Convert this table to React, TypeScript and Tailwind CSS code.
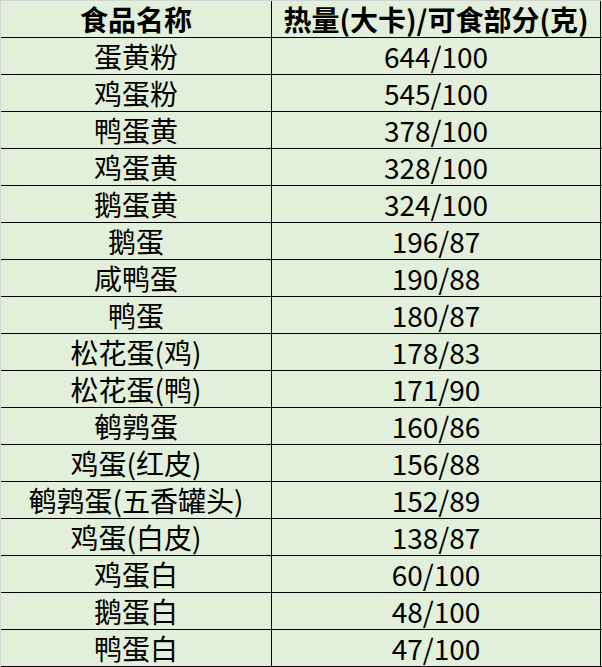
const rows: [string, string][] = [
  ["蛋黄粉", "644/100"],
  ["鸡蛋粉", "545/100"],
  ["鸭蛋黄", "378/100"],
  ["鸡蛋黄", "328/100"],
  ["鹅蛋黄", "324/100"],
  ["鹅蛋", "196/87"],
  ["咸鸭蛋", "190/88"],
  ["鸭蛋", "180/87"],
  ["松花蛋(鸡)", "178/83"],
  ["松花蛋(鸭)", "171/90"],
  ["鹌鹑蛋", "160/86"],
  ["鸡蛋(红皮)", "156/88"],
  ["鹌鹑蛋(五香罐头)", "152/89"],
  ["鸡蛋(白皮)", "138/87"],
  ["鸡蛋白", "60/100"],
  ["鹅蛋白", "48/100"],
  ["鸭蛋白", "47/100"],
];

const Row = ({ name, value, head }: { name: string; value: string; head?: boolean }) => (
  <div className={`flex h-[37px] border-b border-black leading-[36px] ${head ? "font-bold" : ""}`}>
    <div className="w-[271px] border-r border-black text-center">{name}</div>
    <div className="w-[329px] border-r border-black text-center">{value}</div>
  </div>
);

export default function App() {
  return (
    <div
      className="h-[667px] w-[602px] border-l border-t border-[#d4d4d4] bg-[#e2efda] text-[28px] text-black"
      style={{ fontFamily: '"Noto Sans CJK SC", "Noto Sans", sans-serif' }}
    >
      <Row name="食品名称" value="热量(大卡)/可食部分(克)" head />
      {rows.map(([name, value]) => (
        <Row key={name} name={name} value={value} />
      ))}
    </div>
  );
}
